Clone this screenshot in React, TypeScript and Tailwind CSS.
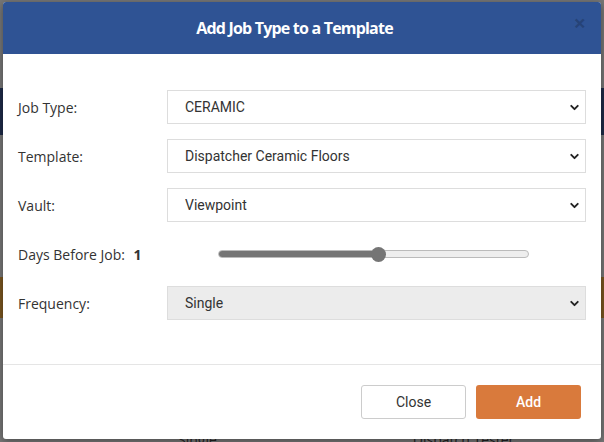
import { ChevronDown } from 'lucide-react';

interface FieldProps {
  label: string;
  value: string;
  muted?: boolean;
}

function SelectField({ label, value, muted }: FieldProps) {
  return (
    <div className="flex items-center">
      <label className="w-[149px] text-[14px] text-[#333]">{label}</label>
      <div className="relative flex-1">
        <select
          defaultValue={value}
          className={`h-[34px] w-full appearance-none border border-[#ddd] pl-[17px] font-['Roboto'] text-[14px] text-[#333] outline-none ${
            muted ? 'bg-[#ececec]' : 'bg-white'
          }`}
        >
          <option>{value}</option>
        </select>
        <ChevronDown
          className="pointer-events-none absolute right-[5px] top-[11px] h-[13px] w-[13px] text-[#222]"
          strokeWidth={3.5}
        />
      </div>
    </div>
  );
}

export default function App() {
  return (
    <div className="relative h-[442px] w-[604px] overflow-hidden bg-[#777] font-['Open_Sans',sans-serif]">
      {/* page behind the backdrop */}
      <div className="flex flex-col">
        <div className="h-[88px]" />
        <div className="h-[47px] bg-[#1e2b48]" />
        <div className="h-[142px]" />
        <div className="h-[41px] bg-[#7a5620]" />
        <div className="h-[119px]" />
        <div className="flex gap-[196px] pl-[178px] text-[14px] leading-[5px] text-[#222]">
          <span>Single</span>
          <span>Dispatch Tester</span>
        </div>
      </div>

      {/* modal */}
      <div className="absolute left-[3px] top-[2px] flex h-[437px] w-[598px] flex-col overflow-hidden rounded-[3px] bg-white shadow-[0_2px_8px_rgba(0,0,0,0.4)]">
        <div className="relative flex h-[52px] items-center justify-center bg-[#2f5394]">
          <h2 className="mr-[15px] text-[16px] font-bold tracking-[-0.8px] text-white">Add Job Type to a Template</h2>
          <span className="absolute right-[15px] top-[9px] text-[22px] leading-[22px] font-bold text-black/20">×</span>
        </div>

        <div className="flex flex-col gap-[15px] px-[15px] pt-[36px]">
          <SelectField label="Job Type:" value="CERAMIC" />
          <SelectField label="Template:" value="Dispatcher Ceramic Floors" />
          <SelectField label="Vault:" value="Viewpoint" />
          <div className="flex h-[34px] items-center">
            <span className="w-[200px] text-[14px] text-[#333]">
              Days Before Job: <b className="ml-[5px]">1</b>
            </span>
            <div className="relative h-[8px] w-[311px] rounded-full border border-[#bbb] bg-[#eee]">
              <div className="h-full w-[160px] rounded-full bg-[#757575]" />
              <div className="absolute left-[152px] top-[-4px] h-[15px] w-[15px] rounded-full bg-[#757575]" />
            </div>
          </div>
          <SelectField label="Frequency:" value="Single" muted />
        </div>

        <div className="mt-[44px] border-t border-[#e5e5e5]" />

        <div className="flex justify-end gap-[10px] pr-[20px] pt-[20px] font-['Roboto']">
          <button className="h-[34px] w-[105px] rounded-[3px] border border-[#ccc] bg-white text-[14px] text-[#333]">
            Close
          </button>
          <button className="h-[34px] w-[105px] rounded-[3px] bg-[#d97a3c] text-[14px] font-medium text-white">
            Add
          </button>
        </div>
      </div>
    </div>
  );
}
